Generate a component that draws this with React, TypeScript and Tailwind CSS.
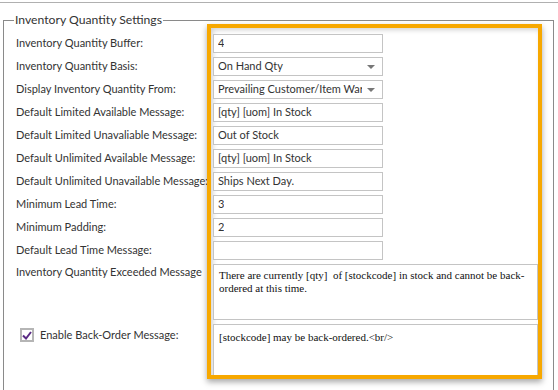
import React from 'react'

const font = { fontFamily: 'Lato, "Segoe UI", sans-serif' }
const serif = { fontFamily: '"Liberation Serif", "Times New Roman", serif' }

const labels = [
  'Inventory Quantity Buffer:',
  'Inventory Quantity Basis:',
  'Display Inventory Quantity From:',
  'Default Limited Available Message:',
  'Default Limited Unavaliable Message:',
  'Default Unlimited Available Message:',
  'Default Unlimited Unavailable Message:',
  'Minimum Lead Time:',
  'Minimum Padding:',
  'Default Lead Time Message:',
]

type Field = { value: string; select?: boolean }

const fields: Field[] = [
  { value: '4' },
  { value: 'On Hand Qty', select: true },
  { value: 'Prevailing Customer/Item Warehouse', select: true },
  { value: '[qty] [uom] In Stock' },
  { value: 'Out of Stock' },
  { value: '[qty] [uom] In Stock' },
  { value: 'Ships Next Day.' },
  { value: '3' },
  { value: '2' },
  { value: '' },
]

function TextBox({ field }: { field: Field }) {
  return (
    <div className="relative flex items-center w-[170px] h-[19px] mb-[4px] border border-[#c4c4c4] bg-white pl-[4px] text-[11px] text-[#333]">
      <span className={`whitespace-nowrap overflow-hidden ${field.select ? 'w-[144px] shrink-0' : ''}`}>{field.value}</span>
      {field.select && (
        <span className="absolute right-[7px] top-[7px] w-0 h-0 border-l-[4px] border-r-[4px] border-t-[4px] border-l-transparent border-r-transparent border-t-[#777]" />
      )}
    </div>
  )
}

export default function App() {
  return (
    <div className="w-[558px] h-[390px] bg-white overflow-hidden" style={font}>
      <div className="mt-[2px] h-px bg-[#b0b0b0]" />
      <fieldset className="mt-[13px] ml-[3px] w-[551px] h-[400px] border border-[#8a8a8a]">
        <legend className="ml-[10px] px-[1px] text-[12.2px] leading-[8px] text-[#333]">
          Inventory Quantity Settings
        </legend>
        <div className="flex">
          {/* Labels */}
          <div className="w-[191px] ml-[12px] pt-[10px] text-[11px] text-[#333]">
            {labels.map((l) => (
              <div key={l} className="h-[19px] mb-[4px] flex items-center whitespace-nowrap">
                {l}
              </div>
            ))}
            <div className="h-[60px] whitespace-nowrap">Inventory Quantity Exceeded Message</div>
            <div className="flex items-center gap-[6px] ml-[4px] mt-[3px]">
              <div className="w-[14px] h-[14px] border-2 border-[#b5b5b5] bg-white flex items-center justify-center">
                <svg width="10" height="9" viewBox="0 0 10 9">
                  <path d="M1 4.5 L4 7.5 L9 1" fill="none" stroke="#5a2a85" strokeWidth="2" />
                </svg>
              </div>
              <span className="whitespace-nowrap">Enable Back-Order Message:</span>
            </div>
          </div>

          {/* Highlighted fields */}
          <div className="w-[335px] h-[355px] border-[4px] border-[#f7a800] pl-[2px] pt-[6px] overflow-hidden bg-white shadow-[0_3px_6px_rgba(0,0,0,0.35),inset_2px_2px_5px_rgba(0,0,0,0.18)]">
            {fields.map((f, i) => (
              <TextBox key={i} field={f} />
            ))}
            <div
              className="w-[325px] h-[56px] mb-[4px] border border-[#c4c4c4] bg-white px-[5px] pt-[4px] text-[11px] leading-[12.5px] text-[#111]"
              style={serif}
            >
              There are currently [qty]&nbsp; of [stockcode] in stock and cannot be back-ordered at this time.
            </div>
            <div
              className="w-[325px] h-[70px] border border-[#c4c4c4] bg-white px-[5px] pt-[6px] text-[11px] leading-[12.5px] text-[#111]"
              style={serif}
            >
              [stockcode] may be back-ordered.&lt;br/&gt;
            </div>
          </div>
        </div>
      </fieldset>
    </div>
  )
}
